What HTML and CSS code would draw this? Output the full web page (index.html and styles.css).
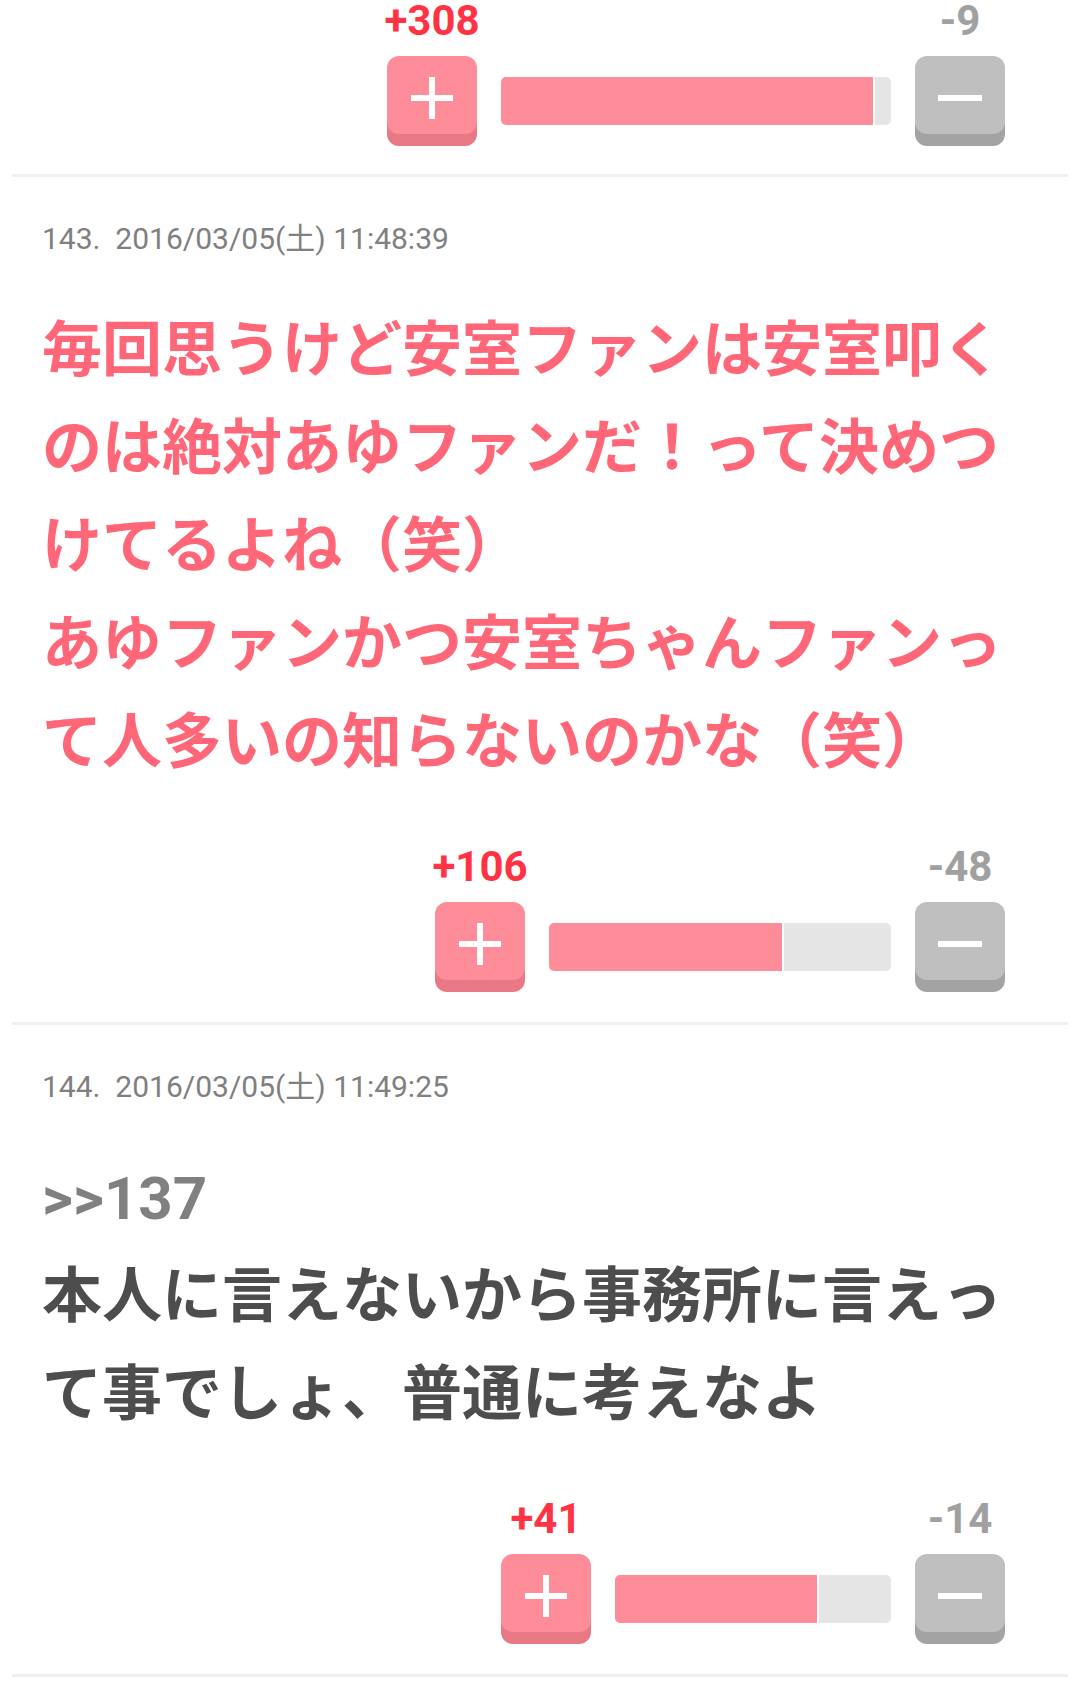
FILE: index.html
```html
<!DOCTYPE html>
<html lang="ja">
<head>
<meta charset="utf-8">
<title>comments</title>
<link rel="stylesheet" href="styles.css">
</head>
<body>
<div class="page">
  <section class="post post--first">
    <div class="vote">
      <div class="vcol">
        <div class="count count--up">+308</div>
        <div class="btn btn--up"><svg class="ico" width="42" height="42" viewBox="0 0 42 42"><rect x="18" y="0" width="6" height="42" fill="#fff"/><rect x="0" y="18" width="42" height="6" fill="#fff"/></svg></div>
      </div>
      <div class="bar" style="width:390px"><div class="bar__up" style="width:95.4%"></div><div class="bar__down"></div></div>
      <div class="vcol">
        <div class="count count--down">-9</div>
        <div class="btn btn--down"><svg class="ico" width="44" height="42" viewBox="0 0 44 42"><rect x="0" y="18" width="44" height="6" fill="#fff"/></svg></div>
      </div>
    </div>
  </section>

  <section class="post">
    <div class="meta">143.&nbsp; 2016/03/05(土) 11:48:39</div>
    <div class="body body--hot">毎回思うけど安室ファンは安室叩くのは絶対あゆファンだ！って決めつけてるよね（笑）<br>あゆファンかつ安室ちゃんファンって人多いの知らないのかな（笑）</div>
    <div class="vote">
      <div class="vcol">
        <div class="count count--up">+106</div>
        <div class="btn btn--up"><svg class="ico" width="42" height="42" viewBox="0 0 42 42"><rect x="18" y="0" width="6" height="42" fill="#fff"/><rect x="0" y="18" width="42" height="6" fill="#fff"/></svg></div>
      </div>
      <div class="bar" style="width:342px"><div class="bar__up" style="width:68.2%"></div><div class="bar__down"></div></div>
      <div class="vcol">
        <div class="count count--down">-48</div>
        <div class="btn btn--down"><svg class="ico" width="44" height="42" viewBox="0 0 44 42"><rect x="0" y="18" width="44" height="6" fill="#fff"/></svg></div>
      </div>
    </div>
  </section>

  <section class="post">
    <div class="meta">144.&nbsp; 2016/03/05(土) 11:49:25</div>
    <div class="body"><span class="anchor">&gt;&gt;137</span><br>本人に言えないから事務所に言えって事でしょ、普通に考えなよ</div>
    <div class="vote">
      <div class="vcol">
        <div class="count count--up">+41</div>
        <div class="btn btn--up"><svg class="ico" width="42" height="42" viewBox="0 0 42 42"><rect x="18" y="0" width="6" height="42" fill="#fff"/><rect x="0" y="18" width="42" height="6" fill="#fff"/></svg></div>
      </div>
      <div class="bar" style="width:276px"><div class="bar__up" style="width:73.2%"></div><div class="bar__down"></div></div>
      <div class="vcol">
        <div class="count count--down">-14</div>
        <div class="btn btn--down"><svg class="ico" width="44" height="42" viewBox="0 0 44 42"><rect x="0" y="18" width="44" height="6" fill="#fff"/></svg></div>
      </div>
    </div>
  </section>
</div>
</body>
</html>
```
FILE: styles.css
```css
html, body {
  margin: 0;
  padding: 0;
  background: #ffffff;
}

.page {
  padding: 0 12px;
  font-family: Roboto, "Noto Sans CJK JP", sans-serif;
}

.post {
  padding: 42px 30px 30px;
  border-bottom: 3px solid #f0f0f0;
}

.post--first {
  padding-top: 0;
  padding-bottom: 28px;
}

.meta {
  font-size: 30px;
  line-height: 40px;
  font-weight: 400;
  color: #808080;
}

.body {
  margin-top: 43px;
  font-size: 60px;
  line-height: 98px;
  font-weight: 700;
  color: #4d4d4d;
}

.body--hot {
  color: #ff6677;
}

.anchor {
  color: #808080;
}

.vote {
  margin-top: 54px;
  display: flex;
  justify-content: flex-end;
  align-items: flex-end;
  padding-right: 33px;
}

.post--first .vote {
  margin-top: 0;
}

.vcol {
  width: 90px;
  display: flex;
  flex-direction: column;
  align-items: center;
}

.count {
  font-size: 42px;
  line-height: 42px;
  font-weight: 700;
  margin-bottom: 14px;
  white-space: nowrap;
}

.count--up {
  color: #ff3344;
}

.count--down {
  color: #a0a0a0;
}

.btn {
  width: 90px;
  height: 78px;
  margin-bottom: 12px;
  border-radius: 12px;
  display: flex;
  justify-content: center;
  align-items: flex-start;
}

.btn--up {
  background: #ff8c99;
  box-shadow: 0 12px 0 #e97885;
}

.btn--down {
  background: #bfbfbf;
  box-shadow: 0 12px 0 #a3a3a3;
}

.ico {
  display: block;
  margin-top: 21px;
}

.bar {
  height: 48px;
  margin: 0 24px 21px;
  display: flex;
}

.bar__up {
  height: 100%;
  background: #ff8c99;
  border-radius: 5px 0 0 5px;
}

.bar__down {
  flex: 1;
  height: 100%;
  margin-left: 2px;
  background: #e5e5e5;
  border-radius: 0 5px 5px 0;
}
```
